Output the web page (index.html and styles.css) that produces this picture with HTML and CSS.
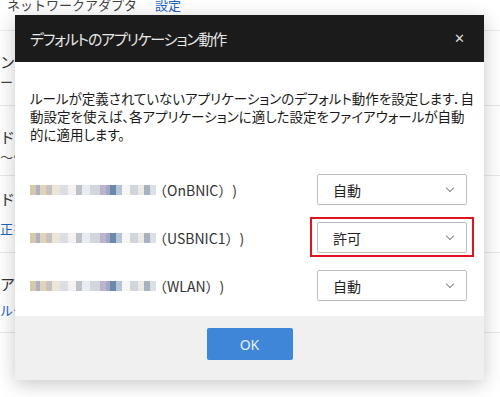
FILE: index.html
```html
<!DOCTYPE html>
<html lang="ja">
<head>
  <meta charset="UTF-8" />
  <title>デフォルトのアプリケーション動作</title>
  <link rel="stylesheet" href="styles.css">
</head>
<body>
  <!-- 背景の設定ページ -->
  <div class="page">
    <div class="topbar">
      <span class="crumb">ネットワークアダプタ</span>
      <a href="#" class="link">設定</a>
    </div>
    <div class="section sec-1">
      <div class="big">ン</div>
      <div class="sub">ード</div>
    </div>
    <div class="section sec-2">
      <div class="big">ド</div>
      <div class="sub">〜^</div>
    </div>
    <div class="section sec-3">
      <div class="big">ド</div>
      <a href="#" class="link">正を</a>
    </div>
    <div class="section sec-4">
      <div class="big">アフ</div>
      <a href="#" class="link">ルー</a>
    </div>
  </div>

  <div class="dialog">
    <div class="dialog-header">
      <span class="dialog-title">デフォルトのアプリケーション動作</span>
      <span class="close">✕</span>
    </div>
    <div class="dialog-body">
      <p class="desc">ルールが定義されていないアプリケーションのデフォルト動作を設定します．自<br>動設定を使えば、各アプリケーションに適した設定をファイアウォールが自動<br>的に適用します。</p>

      <div class="rows">
        <div class="row">
          <div class="label"><span class="blur"></span>（OnBNIC）)</div>
          <div class="select">自動<span class="chev"></span></div>
        </div>
        <div class="row">
          <div class="label"><span class="blur"></span>（USBNIC1）)</div>
          <div class="select marked">許可<span class="chev"></span></div>
        </div>
        <div class="row">
          <div class="label"><span class="blur"></span>（WLAN）)</div>
          <div class="select">自動<span class="chev"></span></div>
        </div>
      </div>
    </div>
    <div class="dialog-footer">
      <button class="ok-button">OK</button>
    </div>
  </div>
</body>
</html>
```

FILE: styles.css
```css
* {
  box-sizing: border-box;
  margin: 0;
  padding: 0;
}

html, body {
  height: 100%;
  background: #fff;
  font-family: 'Noto Sans CJK JP', 'Noto Sans', sans-serif;
  color: #222;
  overflow: hidden;
}

/* 背景ページ */
.page {
  font-size: 13px;
  color: #444;
}

.topbar {
  height: 33px;
  border-bottom: 1px solid #ebebeb;
  padding-left: 7px;
  line-height: 14px;
  display: flex;
  gap: 18px;
  margin-top: -2px;
}

.link {
  color: #1a62c4;
  text-decoration: none;
}

.section {
  display: flex;
  flex-direction: column;
  border-bottom: 1px solid #e8e8e8;
}

.section .big {
  font-size: 15px;
  color: #333;
}

.sec-1 { height: 75px; padding-top: 20px; }
.sec-2 { height: 70px; padding-top: 20px; }
.sec-3 { height: 77px; padding-top: 12px; gap: 10px; }
.sec-4 { height: 80px; padding-top: 20px; gap: 6px; }

/* ダイアログ */
.dialog {
  position: absolute;
  top: 15px;
  left: 15px;
  width: 469px;
  background: #fff;
  box-shadow: 0 4px 18px rgba(0, 0, 0, 0.22);
}

.dialog-header {
  height: 47px;
  background: #1b1b1b;
  display: flex;
  align-items: center;
  justify-content: space-between;
  padding: 0 19px 0 15px;
}

.dialog-title {
  color: #e8e8e8;
  font-size: 15px;
  font-feature-settings: "palt";
  letter-spacing: -1.2px;
}

.close {
  color: #ddd;
  font-size: 13px;
  font-family: 'DejaVu Sans', sans-serif;
}

.dialog-body {
  padding: 27px 17px 15px 15px;
}

.desc {
  font-size: 13.5px;
  line-height: 18px;
  color: #1a1a1a;
  font-feature-settings: "palt";
  white-space: nowrap;
}

.rows {
  margin-top: 31px;
  display: flex;
  flex-direction: column;
  gap: 17px;
}

.row {
  display: flex;
  align-items: center;
  justify-content: space-between;
  height: 31px;
}

.label {
  display: flex;
  align-items: center;
  font-size: 14px;
  color: #333;
  text-spacing-trim: space-all;
}

.blur {
  display: inline-block;
  width: 126px;
  height: 10px;
  margin-right: -3px;
  opacity: 0.75;
  background:
    linear-gradient(90deg,
      #c9b48e 0 6px, #8d95b5 6px 10px, #d8c49e 10px 16px, #b6b0a4 16px 22px,
      #e4dccd 22px 30px, #cfd3db 30px 38px, #eeeeee 38px 46px, #a9adb4 46px 52px,
      #dfe6ee 52px 60px, #c5c8cf 60px 70px, #a69ac0 70px 76px, #7e8fa8 76px 80px,
      #3e5f8e 80px 86px, #9cb2cc 86px 92px, #f2f2f2 92px 100px, #bfc6d2 100px 108px,
      #e7e2da 108px 114px, #8899aa 114px 120px, #d0d5dc 120px 126px);
}

.select {
  position: relative;
  width: 150px;
  height: 31px;
  border: 1px solid #bcbcbc;
  border-radius: 2px;
  background: #fff;
  display: flex;
  align-items: center;
  justify-content: space-between;
  padding: 0 13px 0 15px;
  font-size: 14px;
  color: #222;
}

.chev {
  width: 6px;
  height: 6px;
  border-right: 1px solid #888;
  border-bottom: 1px solid #888;
  transform: rotate(45deg);
  margin-top: -4px;
}

/* 赤枠の強調 */
.select.marked::after {
  content: "";
  position: absolute;
  top: -6px;
  bottom: -5px;
  left: -8px;
  right: -8px;
  border: 2px solid #e0141e;
}

.dialog-footer {
  background: #f0f0f0;
  height: 64px;
  display: flex;
  justify-content: center;
  padding-top: 12px;
}

.ok-button {
  width: 86px;
  height: 32px;
  border: none;
  border-radius: 2px;
  background: #3f86d8;
  color: #e8f0fb;
  font-family: 'Noto Sans', sans-serif;
  font-size: 14px;
}
```
